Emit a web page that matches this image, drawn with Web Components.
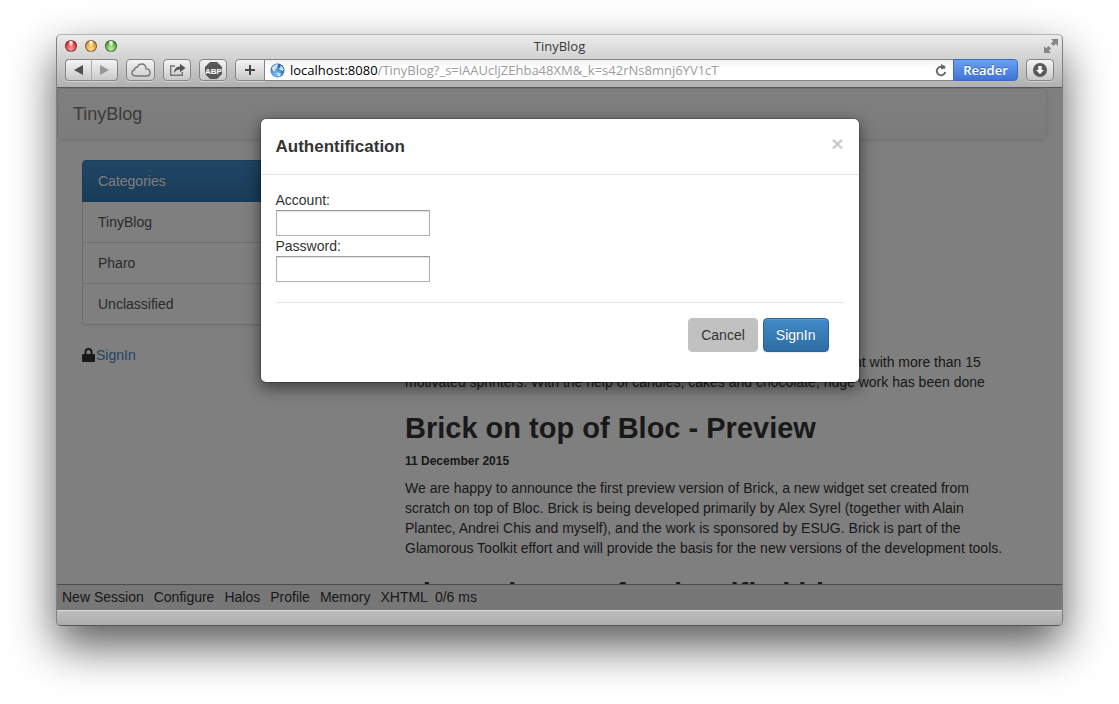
<!DOCTYPE html>
<html lang="en">
<head>
<meta charset="utf-8">
<title>TinyBlog</title>
<style>
  html, body { height: 100%; margin: 0; }
  body {
    box-sizing: border-box;
    padding: 34px 56px 78px;
    overflow: hidden;
    background: #fff;
    font: 14px/20px "Liberation Sans", Arial, sans-serif;
    color: #333;
  }
</style>
</head>
<body>
<browser-window>
  <browser-chrome slot="chrome" heading="TinyBlog">
    <span slot="host">localhost:8080</span><span slot="path">/TinyBlog?_s=iAAUcljZEhba48XM&amp;_k=s42rNs8mnj6YV1cT</span>
  </browser-chrome>
  <blog-page>
    <nav-bar slot="nav">TinyBlog</nav-bar>
    <category-list slot="side" heading="Categories" items="TinyBlog,Pharo,Unclassified"></category-list>
    <sign-in-link slot="side">SignIn</sign-in-link>
    <blog-article class="first">The Pharo sprint of last Friday at Lille was really a great and busy moment with more than 15 motivated sprinters. With the help of candles, cakes and chocolate, huge work has been done</blog-article>
    <blog-article heading="Brick on top of Bloc - Preview" date="11 December 2015">We are happy to announce the first preview version of Brick, a new widget set created from scratch on top of Bloc. Brick is being developed primarily by Alex Syrel (together with Alain Plantec, Andrei Chis and myself), and the work is sponsored by ESUG. Brick is part of the Glamorous Toolkit effort and will provide the basis for the new versions of the development tools.</blog-article>
    <blog-article heading="The end zone of a classified blog"></blog-article>
    <dev-toolbar slot="tools"></dev-toolbar>
    <login-dialog slot="dialog" heading="Authentification"></login-dialog>
  </blog-page>
</browser-window>

<script>
const define = (name, html, setup) => customElements.define(name, class extends HTMLElement {
  connectedCallback() {
    if (this.shadowRoot) return;
    const root = this.attachShadow({ mode: 'open' });
    root.innerHTML = html;
    const h = root.querySelector('[data-heading]');
    if (h) h.textContent = this.getAttribute('heading') || '';
    if (setup) setup(this, root);
  }
});

define('browser-window', `
<style>
  :host {
    display: flex; flex-direction: column; box-sizing: border-box; height: 100%;
    border: 1px solid; border-color: #b4b4b4 #808080 #555; border-radius: 5px;
    background: #7f7f7f; background-clip: padding-box;
    box-shadow: 0 20px 45px rgba(0,0,0,.65);
  }
  ::slotted(blog-page) { flex: 1; min-height: 0; }
  footer {
    height: 14px; border-top: 1px solid #dcdcdc; border-radius: 0 0 4px 4px;
    background: linear-gradient(#bdbdbd, #aeaeae);
  }
</style>
<slot name="chrome"></slot><slot></slot><footer></footer>`);

define('tool-button', `
<style>
  :host { display: block; width: 28px; }
  button {
    display: flex; align-items: center; justify-content: center; box-sizing: border-box;
    width: 100%; height: 22px; margin: 0; padding: 0;
    border: 1px solid #858585; border-width: var(--edges, 1px); border-radius: var(--radius, 4px);
    background: linear-gradient(#f4f4f4, #c9c9c9); color: #4a4a4a;
    box-shadow: 0 1px 0 rgba(255,255,255,.4);
  }
</style>
<button><slot></slot></button>`, (el, root) => {
  root.querySelector('button').setAttribute('aria-label', el.getAttribute('label'));
});

define('browser-chrome', `
<style>
  :host {
    display: block; border-bottom: 1px solid #585858; border-radius: 4px 4px 0 0;
    background: linear-gradient(#ebebeb, #cfcfcf 50%, #b0b0b0);
    font: 13px/16px "Open Sans", "Noto Sans", sans-serif; color: #3a3a3a;
  }
  .title { display: grid; grid-template-columns: 1fr auto 1fr; align-items: center; height: 22px; padding: 0 4px 2px; }
  .lights { display: flex; gap: 8px; padding-left: 4px; }
  .lights i { width: 12px; height: 12px; border-radius: 50%; box-sizing: border-box; border: 1px solid rgba(0,0,0,.45); }
  .r { background: radial-gradient(ellipse at 50% 15%, #fff 5%, transparent 40%), radial-gradient(circle at 50% 80%, #ff9d9d, #d8232b 80%); }
  .y { background: radial-gradient(ellipse at 50% 15%, #fff 5%, transparent 40%), radial-gradient(circle at 50% 80%, #ffe08a, #dc8a1e 80%); }
  .g { background: radial-gradient(ellipse at 50% 15%, #fff 5%, transparent 40%), radial-gradient(circle at 50% 80%, #c1f09a, #4a9c3a 80%); }
  .full { justify-self: end; display: block; }
  .bar { display: flex; gap: 8px; padding: 0 8px 6px; }
  .pair { display: flex; width: 53px; }
  .pair tool-button { width: 26px; }
  .pair tool-button:first-child { --radius: 4px 0 0 4px; --edges: 1px 0 1px 1px; border-right: 1px solid #aaa; }
  .pair tool-button:last-child { --radius: 0 4px 4px 0; --edges: 1px 1px 1px 0; }
  .cloud { width: 29px; }
  .address { display: flex; flex: 1; min-width: 0; }
  .address tool-button { --radius: 4px 0 0 4px; width: 30px; }
  .field {
    display: flex; align-items: center; flex: 1; min-width: 0; box-sizing: border-box; height: 22px;
    border: 1px solid #858585; border-width: 1px 0; padding: 0 6px 0 5px;
    background: linear-gradient(#f1f1f1, #fff 40%);
    white-space: nowrap; overflow: hidden;
  }
  .url { flex: 1; margin-left: 5px; color: #9b9b9b; display: flex; }
  .url b { font-weight: 400; color: #000; }
  .reader {
    width: 65px; height: 22px; padding: 0; border: 1px solid #3c6cbc; border-radius: 0 4px 4px 0;
    background: linear-gradient(#6ba0f0, #3f74d6); color: #fff;
    font: 600 13px/20px "Open Sans", "Noto Sans", sans-serif; text-shadow: 0 -1px 0 rgba(0,0,0,.25);
  }
</style>
<div class="title">
  <span class="lights"><i class="r"></i><i class="y"></i><i class="g"></i></span>
  <span data-heading></span>
  <svg class="full" width="14" height="14" viewBox="0 0 14 14" fill="#858585"><path d="M7 0h7v7l-2.200-2.200-2.300 2.300-2.600-2.600 2.300-2.300zM0 7l2.200 2.200 2.300-2.300 2.600 2.600-2.300 2.300L7 14H0z"/></svg>
</div>
<div class="bar">
  <div class="pair">
    <tool-button label="Back"><svg width="9" height="10"><path d="M9 0v10L0 5z" fill="#505050"/></svg></tool-button>
    <tool-button label="Forward"><svg width="9" height="10"><path d="M0 0v10l9-5z" fill="#989898"/></svg></tool-button>
  </div>
  <tool-button class="cloud" label="iCloud tabs"><svg width="20" height="14" viewBox="0 0 20 14" fill="none" stroke="#777" stroke-width="1.400"><path d="M5 13C2.500 13 1 11.500 1 9.700 1 8 2.200 7 3.600 6.800 3.500 5 4.800 4 6.200 4.400 7 2 8.700 1 10.500 1c2.600 0 4.500 2 4.600 4.900C17.500 5.900 19 7.300 19 9.500c0 2.100-1.500 3.500-3.500 3.500z"/></svg></tool-button>
  <tool-button label="Share"><svg width="17" height="14" viewBox="0 0 17 14" fill="none"><path d="M6 3H1.700v9.300h11.600V9" stroke="#747474" stroke-width="1.400"/><path d="M5 10c.2-4 2.300-6.200 6-6.400V.8L16.500 5 11 9.200V6.400C8.500 6.400 6.500 7.500 5 10z" fill="#555"/></svg></tool-button>
  <tool-button label="Adblock Plus"><svg width="17" height="17" viewBox="0 0 17 17"><path d="M5 0h7l5 5v7l-5 5H5l-5-5V5z" fill="#585858"/><text x="8.500" y="11.500" text-anchor="middle" font-family="Liberation Sans" font-weight="700" font-size="8" fill="#fff">ABP</text></svg></tool-button>
  <div class="address">
    <tool-button label="Add bookmark"><svg width="10" height="10" fill="#484848"><path d="M4 0h2v4h4v2H6v4H4V6H0V4h4z"/></svg></tool-button>
    <div class="field">
      <svg width="15" height="15" viewBox="0 0 15 15"><defs><radialGradient id="globe" cx=".4" cy=".75" r=".8"><stop offset="0" stop-color="#7cc4f5"/><stop offset="1" stop-color="#1550a4"/></radialGradient></defs><circle cx="7.500" cy="7.500" r="7" fill="url(#globe)"/><path d="M2 4.500C3.200 2.500 5 1.300 7 1l1.500 1L7 3.500 7.500 5 5.500 6.500 5 8.500 3.500 8 2 6.500zM10 2l3 2.500.8 2.500-1.300 1-1.500-1-1 .3L9 5.500l1.500-1zM7 9.500l3 .5 1 1.500L9 13.500 8 13l-.5-2z" fill="#e3f2fc" opacity=".85"/></svg>
      <span class="url" role="textbox" aria-label="Address"><b><slot name="host"></slot></b><slot name="path"></slot></span>
      <svg width="12" height="13" viewBox="0 0 12 13"><path d="M9.700 4.600A4.300 4.300 0 1 0 10.300 8" fill="none" stroke="#666" stroke-width="1.900"/><path d="M6 0l5 2.700-4.700 3z" fill="#666"/></svg>
    </div>
    <button class="reader">Reader</button>
  </div>
  <tool-button label="Downloads"><svg width="14" height="14" viewBox="0 0 14 14"><circle cx="7" cy="7" r="7" fill="#5a5a5a"/><path d="M5.300 3h3.400v4H11l-4 4.300L3 7h2.300z" fill="#f4f4f4"/></svg></tool-button>
</div>`);

define('blog-page', `
<style>
  :host { display: flex; flex-direction: column; position: relative; overflow: hidden; background: #fff; }
  .content { flex: 1; min-height: 0; overflow: hidden; }
  .grid { display: grid; grid-template-columns: 1fr 2fr; margin: 20px 26px 0 10px; }
  .grid > div { padding: 0 15px; min-width: 0; }
  .backdrop { position: absolute; inset: 0; background: rgba(0,0,0,.5); }
</style>
<div class="content">
  <slot name="nav"></slot>
  <div class="grid"><div><slot name="side"></slot></div><div><slot></slot></div></div>
</div>
<slot name="tools"></slot>
<div class="backdrop"><slot name="dialog"></slot></div>`);

define('nav-bar', `
<style>
  :host {
    display: block; margin-right: 15px; padding: 15px; height: 20px;
    border: 1px solid #e7e7e7; border-radius: 4px; background: linear-gradient(#fff, #f8f8f8);
    box-shadow: inset 0 1px 0 rgba(255,255,255,.15), 0 1px 5px rgba(0,0,0,.075);
    font-size: 18px;
  }
  a { color: #777; text-decoration: none; text-shadow: 0 1px 0 rgba(255,255,255,.25); }
</style>
<a href="#"><slot></slot></a>`);

define('category-list', `
<style>
  :host { display: block; border-radius: 4px; box-shadow: 0 1px 2px rgba(0,0,0,.075); }
  a { display: block; padding: 10px 15px; border: 1px solid #ddd; border-top: 0; color: #555; text-decoration: none; }
  a.active {
    border: 1px solid #3278b3; border-radius: 4px 4px 0 0; color: #fff;
    background: linear-gradient(#428bca, #3278b3); text-shadow: 0 -1px 0 #3071a9;
  }
  a:last-child { border-radius: 0 0 4px 4px; }
</style>
<a class="active" href="#" data-heading></a>`, (el, root) => {
  for (const item of el.getAttribute('items').split(',')) {
    const a = document.createElement('a');
    a.href = '#';
    a.textContent = item;
    root.append(a);
  }
});

define('sign-in-link', `
<style>
  :host { display: flex; align-items: center; margin-top: 20px; }
  a { color: #428bca; text-decoration: none; }
</style>
<svg width="14" height="14" viewBox="0 0 14 14" fill="#333"><path fill-rule="evenodd" d="M2.500 6V4a4 4 0 0 1 4-4 4 4 0 0 1 4 4v2H12a1 1 0 0 1 1 1v6a1 1 0 0 1-1 1H1a1 1 0 0 1-1-1V7a1 1 0 0 1 1-1zM4.500 6h4V4a2 2 0 0 0-4 0z"/></svg>
<a href="#"><slot></slot></a>`);

define('blog-article', `
<style>
  :host { display: block; max-width: 612px; }
  :host(.first) { padding-top: 192px; }
  h2 { margin: 20px 0 10px; font-size: 29px; line-height: 33px; font-weight: 700; white-space: nowrap; }
  h6 { margin: 10px 0; font-size: 12px; line-height: 13px; font-weight: 700; }
  p { margin: 0 0 10px; }
</style>
<h2 data-heading></h2><h6></h6><p><slot></slot></p>`, (el, root) => {
  const date = root.querySelector('h6');
  date.textContent = el.getAttribute('date') || '';
  if (!date.textContent) date.remove();
  if (!el.getAttribute('heading')) root.querySelector('h2').remove();
});

define('dev-toolbar', `
<style>
  :host { display: flex; gap: 10px; padding: 2px 5px 3px; border-top: 1px solid #999; background: #eee; white-space: nowrap; }
  a { color: #333; text-decoration: none; }
  .group { display: flex; gap: 7px; }
</style>
<a href="#">New Session</a><a href="#">Configure</a><a href="#">Halos</a><a href="#">Profile</a><a href="#">Memory</a><div class="group"><a href="#">XHTML</a><span>0/6 ms</span></div>`);

define('login-dialog', `
<style>
  :host {
    display: block; box-sizing: border-box; max-width: 600px; margin: 30px auto;
    border: 1px solid rgba(0,0,0,.2); border-radius: 6px;
    background: #fff; background-clip: padding-box; box-shadow: 0 5px 15px rgba(0,0,0,.5);
  }
  header { display: flex; justify-content: space-between; padding: 15px; border-bottom: 1px solid #e5e5e5; }
  h4 { margin: 0; font-size: 17px; line-height: 25px; font-weight: 700; }
  .close { height: 21px; margin: -1px 0 0; padding: 0; border: 0; background: none; color: #000; opacity: .2; font: 700 21px/21px "Liberation Sans", Arial, sans-serif; }
  .body { padding: 15px; }
  label { display: block; }
  input {
    display: block; box-sizing: border-box; width: 154px; height: 26px; margin: 0; padding: 2px 4px;
    border: 1px solid #b0b0b0; border-top-color: #9c9c9c; border-radius: 0; background: #fff;
    box-shadow: inset 0 1px 1px rgba(0,0,0,.12); font: inherit; outline: 0;
  }
  footer { display: flex; justify-content: flex-end; gap: 5px; margin-top: 20px; padding: 15px; border-top: 1px solid #e5e5e5; }
  footer button {
    height: 34px; padding: 6px 12px; border: 1px solid #c1c1c1; border-radius: 4px;
    background: #c1c1c1; color: #333; font: inherit;
  }
  footer .primary {
    border-color: #2b669a; background: linear-gradient(#428bca, #2d6ca2); color: #fff;
    text-shadow: 0 -1px 0 rgba(0,0,0,.2);
    box-shadow: inset 0 1px 0 rgba(255,255,255,.15), 0 1px 1px rgba(0,0,0,.075);
  }
</style>
<header><h4 data-heading></h4><button class="close" aria-label="Close">×</button></header>
<form class="body">
  <label for="account">Account:</label><input id="account" type="text">
  <label for="password">Password:</label><input id="password" type="password">
  <footer><button type="button">Cancel</button><button type="button" class="primary">SignIn</button></footer>
</form>`, (el) => { el.setAttribute('role', 'dialog'); });
</script>
</body>
</html>
